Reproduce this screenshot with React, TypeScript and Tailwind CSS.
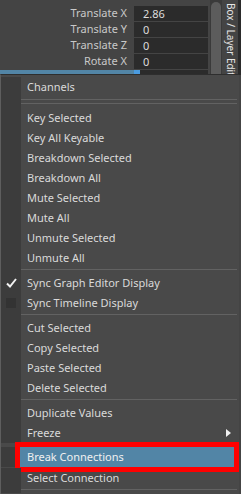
import React from "react";

type Row =
  | { kind: "item"; label: string; check?: "on" | "off"; sub?: boolean }
  | { kind: "sep" };

const font = { fontFamily: '"Noto Sans", "Open Sans", sans-serif' };

const attrs = [
  { label: "Translate X", value: "2.86" },
  { label: "Translate Y", value: "0" },
  { label: "Translate Z", value: "0" },
  { label: "Rotate X", value: "0" },
];

const rows: Row[] = [
  { kind: "item", label: "Key Selected" },
  { kind: "item", label: "Key All Keyable" },
  { kind: "item", label: "Breakdown Selected" },
  { kind: "item", label: "Breakdown All" },
  { kind: "item", label: "Mute Selected" },
  { kind: "item", label: "Mute All" },
  { kind: "item", label: "Unmute Selected" },
  { kind: "item", label: "Unmute All" },
  { kind: "sep" },
  { kind: "item", label: "Sync Graph Editor Display", check: "on" },
  { kind: "item", label: "Sync Timeline Display", check: "off" },
  { kind: "sep" },
  { kind: "item", label: "Cut Selected" },
  { kind: "item", label: "Copy Selected" },
  { kind: "item", label: "Paste Selected" },
  { kind: "item", label: "Delete Selected" },
  { kind: "sep" },
  { kind: "item", label: "Duplicate Values" },
  { kind: "item", label: "Freeze", sub: true },
];

function Gutter({ children }: { children?: React.ReactNode }) {
  return (
    <div className="w-[20px] shrink-0 self-stretch bg-[#3c3c3c] flex items-center justify-center">
      {children}
    </div>
  );
}

function Separator() {
  return (
    <div className="flex h-[5px]">
      <Gutter />
      <div className="flex-1 pt-[1px] pr-[2px]">
        <div className="h-px bg-[#626262]" />
      </div>
    </div>
  );
}

function Item({ row }: { row: Extract<Row, { kind: "item" }> }) {
  return (
    <div className="flex h-[20px]">
      <Gutter>
        {row.check === "on" && (
          <svg width="11" height="10" viewBox="0 0 11 10">
            <path d="M1 5.5 L4 8.5 L10 1" stroke="#f2f2f2" strokeWidth="2" fill="none" />
          </svg>
        )}
        {row.check === "off" && <div className="w-[10px] h-[10px] bg-[#333333]" />}
      </Gutter>
      <div className="flex-1 flex items-center pl-[6px] pr-[8px] text-[11px] text-[#dadada]">
        <span className="flex-1">{row.label}</span>
        {row.sub && (
          <svg width="5" height="8" viewBox="0 0 5 8">
            <path d="M0 0 L5 4 L0 8 Z" fill="#f0f0f0" />
          </svg>
        )}
      </div>
    </div>
  );
}

export default function App() {
  return (
    <div className="relative w-[241px] h-[494px] overflow-hidden bg-[#444444]" style={font}>
      {/* attribute editor behind the menu */}
      <div className="flex h-[75px]">
        <div className="w-[210px] flex flex-col gap-px pt-[6px]">
          {attrs.map((a) => (
            <div key={a.label} className="flex h-[15px] items-center">
              <div className="w-[128px] text-right text-[11px] text-[#c8c8c8] pr-[1px]">{a.label}</div>
              <div className="w-[6px]" />
              <div className="w-[74px] h-full bg-[#2b2b2b] pl-[9px] text-[11px] text-[#dddddd] leading-[15px]">
                {a.value}
              </div>
            </div>
          ))}
          <div className="flex h-[15px]">
            <div className="w-[134px] bg-[#5285a6] text-right text-[11px] text-[#eeeeee] pr-[7px]">Rotate Y</div>
            <div className="w-[6px] bg-[#4a9be0]" />
            <div className="w-[68px] bg-[#2b2b2b] pl-[3px] text-[11px] text-[#dddddd]">0</div>
          </div>
        </div>
        <div className="w-[12px] bg-[#3a3a3a] pt-[2px] px-[1px]">
          <div className="h-full rounded-t-[5px] bg-[#5c5c5c]" />
        </div>
        <div className="w-[16px] pt-[3px] flex justify-center">
          <span className="[writing-mode:vertical-rl] text-[10px] text-[#e6e6e6] whitespace-nowrap">
            Box / Layer Editor
          </span>
        </div>
        <div className="w-[3px] bg-[#2b2b2b]" />
      </div>

      {/* popup menu */}
      <div className="absolute left-0 top-[74px] w-[239px] bottom-0 bg-[#494949] border-l border-t border-l-[#5e5e5e] border-t-[#2e2e2e] pt-[2px]">
        <Item row={{ kind: "item", label: "Channels" }} />
        <div className="flex h-[11px]">
          <Gutter />
          <div className="flex-1 pt-[2px] pr-[2px]">
            <div className="h-px bg-[#626262]" />
            <div className="h-[3px]" />
            <div className="h-px bg-[#626262]" />
          </div>
        </div>
        {rows.map((r, i) => (r.kind === "sep" ? <Separator key={i} /> : <Item key={i} row={r} />))}
        <div className="flex h-[20px] mt-[4px]">
          <div className="w-[19px] bg-[#3c3c3c]" />
          <div className="w-[214px] bg-[#5285a6] outline-[5px] outline-solid outline-[#ff0000] flex items-center pl-[7px] text-[11px] text-[#f0f0f0]">
            Break Connections
          </div>
        </div>
        <div className="mt-[1px]">
          <Item row={{ kind: "item", label: "Select Connection" }} />
        </div>
        <Separator />
      </div>
    </div>
  );
}
